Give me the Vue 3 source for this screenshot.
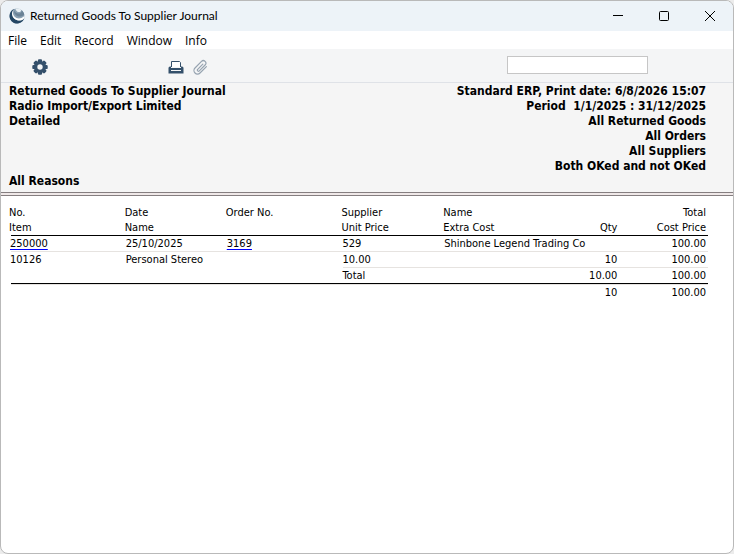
<script setup>
import { ref } from 'vue'

const search = ref('')
const menus = ['File', 'Edit', 'Record', 'Window', 'Info']
const leftLines = ['Returned Goods To Supplier Journal', 'Radio Import/Export Limited', 'Detailed']
const rightLines = [
  'Standard ERP, Print date: 6/8/2026 15:07',
  'Period  1/1/2025 : 31/12/2025',
  'All Returned Goods',
  'All Orders',
  'All Suppliers',
  'Both OKed and not OKed',
]
const heads = [
  ['No.', 'Date', 'Order No.', 'Supplier', 'Name', '', 'Total'],
  ['Item', 'Name', '', 'Unit Price', 'Extra Cost', 'Qty', 'Cost Price'],
]
</script>

<template>
  <main class="window">
    <header class="titlebar">
      <svg class="logo" viewBox="0 0 16 16" aria-hidden="true">
        <circle cx="8" cy="8" r="7.500" fill="#8ba1b3" />
        <path d="M5 1.100C1.600 2.400-.2 6.300.8 9.900c1.100 3.900 5 6.300 9 5.400 2.900-.7 5-2.900 5.600-5.600C13.500 12.500 9.500 13.400 6.400 11.500 3.300 9.500 2.700 5 5 1.100z" fill="#234664" />
        <path d="M4.700 1.300C3.600 4 3.700 6.600 5.400 8.500c2.300 2.600 6.600 2.600 9.400 0 .3-.3.600-.6.700-.9.100 1.300-.2 2.500-.8 3.500-2.600 2.100-6.700 2-9.300-.3C2.600 8.300 2.200 4.400 4.700 1.300z" fill="#fff" />
        <path d="M5 2.200C4.700 4.600 6 7.300 8.600 8.200c2.400.9 5 .2 6.700-1.700C14.900 4.800 14 3.300 12.700 2.200c.2 1.700-1 3.100-2.700 3.300C8 5.700 6.200 4.500 5 2.200z" fill="#6a8296" />
        <path d="M6.400.9c.8 2 2.100 3.300 3.700 3.200 1.500-.1 2.200-1.200 2-2.400C10.400.5 8.300.300 6.400.9z" fill="#e9f0f4" />
      </svg>
      <h1>Returned Goods To Supplier Journal</h1>
      <div class="controls">
        <button type="button" aria-label="Minimize">
          <svg viewBox="0 0 12 12"><path d="M1 5.500h10" /></svg>
        </button>
        <button type="button" aria-label="Maximize">
          <svg viewBox="0 0 12 12"><rect x="1.500" y="1.500" width="9" height="9" rx="1" /></svg>
        </button>
        <button type="button" aria-label="Close">
          <svg viewBox="0 0 12 12"><path d="M1 1l10 10M11 1L1 11" /></svg>
        </button>
      </div>
    </header>

    <nav class="menubar">
      <button v-for="m in menus" :key="m" type="button">{{ m }}</button>
    </nav>

    <div class="toolbar">
      <button type="button" class="gear" aria-label="Settings">
        <svg viewBox="0 0 16 16">
          <g fill="#34506b">
            <rect v-for="a in [0, 45, 90, 135]" :key="a" x="5.900" y=".300" width="4.200" height="15.400" rx="1.200" :transform="`rotate(${a} 8 8)`" />
            <circle cx="8" cy="8" r="6" />
          </g>
          <circle cx="8" cy="8" r="2.700" fill="#f4f5f6" />
        </svg>
      </button>
      <button type="button" class="print" aria-label="Print">
        <svg viewBox="0 0 16 16">
          <path d="M3.500 8V2.500h8l1 1V8" fill="#fff" stroke="#34506b" />
          <path d="M.500 9q0-1.500 1.500-1.500h1V9h10V7.500h1q1.500 0 1.500 1.500v5.500H.500z" fill="#34506b" />
          <rect x="3" y="11" width="10" height="1" fill="#f4f5f6" />
        </svg>
      </button>
      <button type="button" class="clip" aria-label="Attachments">
        <svg viewBox="0 0 16 16">
          <path d="M10.800 5.200L5.700 10.300a1.100 1.100 0 0 0 1.600 1.600l5.800-5.900a2.500 2.500 0 0 0-3.600-3.600L3 9a3.500 3.500 0 0 0 5 5l6.400-6.400" fill="none" stroke="#97a4b1" stroke-width="1.200" stroke-linecap="round" />
        </svg>
      </button>
      <input v-model="search" type="text" aria-label="Search" />
    </div>

    <section class="summary">
      <div class="left">
        <div>
          <p v-for="l in leftLines" :key="l">{{ l }}</p>
        </div>
        <p>All Reasons</p>
      </div>
      <div class="right">
        <p v-for="l in rightLines" :key="l">{{ l }}</p>
      </div>
    </section>
    <div class="divider"></div>

    <section class="report">
      <table>
        <colgroup>
          <col class="c1" /><col class="c2" /><col class="c3" /><col class="c4" /><col class="c5" /><col class="c6" /><col class="c7" />
        </colgroup>
        <thead>
          <tr v-for="(row, i) in heads" :key="i">
            <th v-for="(h, j) in row" :key="j" scope="col" :class="{ num: j > 4 }">{{ h }}</th>
          </tr>
        </thead>
        <tbody>
          <tr class="ruled">
            <td><a href="#250000">250000</a></td>
            <td>25/10/2025</td>
            <td><a href="#3169">3169</a></td>
            <td>529</td>
            <td colspan="2">Shinbone Legend Trading Co</td>
            <td class="num">100.00</td>
          </tr>
          <tr>
            <td>10126</td>
            <td>Personal Stereo</td>
            <td></td>
            <td class="rule">10.00</td>
            <td class="rule"></td>
            <td class="num rule">10</td>
            <td class="num rule">100.00</td>
          </tr>
          <tr class="last">
            <td colspan="3"></td>
            <td>Total</td>
            <td></td>
            <td class="num">10.00</td>
            <td class="num">100.00</td>
          </tr>
        </tbody>
        <tfoot>
          <tr>
            <td colspan="5"></td>
            <td class="num">10</td>
            <td class="num">100.00</td>
          </tr>
        </tfoot>
      </table>
    </section>
  </main>
</template>

<style>
body {
  margin: 0;
  background: #ececec;
}
</style>

<style scoped>
.window {
  box-sizing: border-box;
  min-height: 100vh;
  display: flex;
  flex-direction: column;
  border: 1px solid #b9b9b9;
  border-radius: 8px;
  overflow: hidden;
  background: #fff;
  color: #000;
  font-family: "DejaVu Sans Condensed", "DejaVu Sans", sans-serif;
  font-size: 11px;
  line-height: 15px;
}
p, h1 {
  margin: 0;
}
button {
  padding: 0;
  border: 0;
  background: none;
  color: inherit;
  font: inherit;
}
svg {
  display: block;
}
.titlebar {
  display: flex;
  align-items: center;
  height: 30px;
  padding-left: 8px;
  background: #edf3f8;
}
.logo {
  width: 16px;
  height: 16px;
}
h1 {
  margin-left: 5px;
  font: 400 12px/16px Lato, "Noto Sans", sans-serif;
}
.controls {
  display: flex;
  margin-left: auto;
}
.controls button {
  display: grid;
  place-items: center;
  width: 46px;
  height: 30px;
}
.controls svg {
  width: 12px;
  height: 12px;
  fill: none;
  stroke: #000;
}
.menubar {
  display: flex;
  gap: 13px;
  height: 18px;
  padding-left: 7px;
  font: 12px/20px "Open Sans", "Noto Sans", sans-serif;
}
.toolbar {
  display: flex;
  align-items: center;
  height: 34px;
  padding: 2px 85px 0 31px;
  box-sizing: border-box;
  background: #f4f5f6;
  border-bottom: 1px solid #dfe2e7;
}
.toolbar svg {
  width: 16px;
  height: 16px;
}
.print {
  margin-left: 120px;
}
.clip {
  margin-left: 8px;
}
.toolbar input {
  box-sizing: border-box;
  width: 141px;
  height: 18px;
  margin: 0 0 3px auto;
  padding: 0 3px;
  border: 1px solid #c6c6c6;
  background: #fff;
  font: inherit;
}
.summary {
  display: flex;
  justify-content: space-between;
  padding: 1px 27px 3px 8px;
  background: #f5f5f5;
  font-size: 12px;
  font-weight: 700;
}
.divider {
  height: 2px;
  border: solid #857e80;
  border-width: 1px 0;
  background: #efe8e8;
}
.left {
  display: flex;
  flex-direction: column;
  justify-content: space-between;
}
.right {
  padding-bottom: 15px;
  text-align: right;
  white-space: pre;
}
.report {
  padding: 9px 25px 9px 10px;
}
table {
  width: 100%;
  table-layout: fixed;
  border-collapse: separate;
  border-spacing: 0;
}
.c1 { width: 16.6%; }
.c2 { width: 14.5%; }
.c3 { width: 16.6%; }
.c4 { width: 14.6%; }
.c5 { width: 15%; }
.c6 { width: 10%; }
.c7 { width: 12.7%; }
th, td {
  padding: 0;
  font-weight: 400;
  text-align: left;
  white-space: nowrap;
}
th {
  height: 15px;
  text-indent: -2px;
}
td {
  height: 15px;
  text-indent: -1px;
}
th.num, td.num {
  padding-right: 2px;
  text-align: right;
}
thead tr:last-child th {
  border-bottom: 1px solid #000;
}
tbody td {
  border-bottom: 1px solid transparent;
}
.ruled td, td.rule {
  border-bottom-color: #e6e3e0;
}
.last td {
  border-bottom-color: #000;
}
tfoot td {
  border-top: 1px solid #e6e3e0;
}
a {
  color: #000;
  text-decoration-line: underline;
  text-decoration-color: #00f;
  text-decoration-thickness: 1px;
  text-decoration-skip-ink: none;
  text-underline-offset: 2px;
}
</style>
